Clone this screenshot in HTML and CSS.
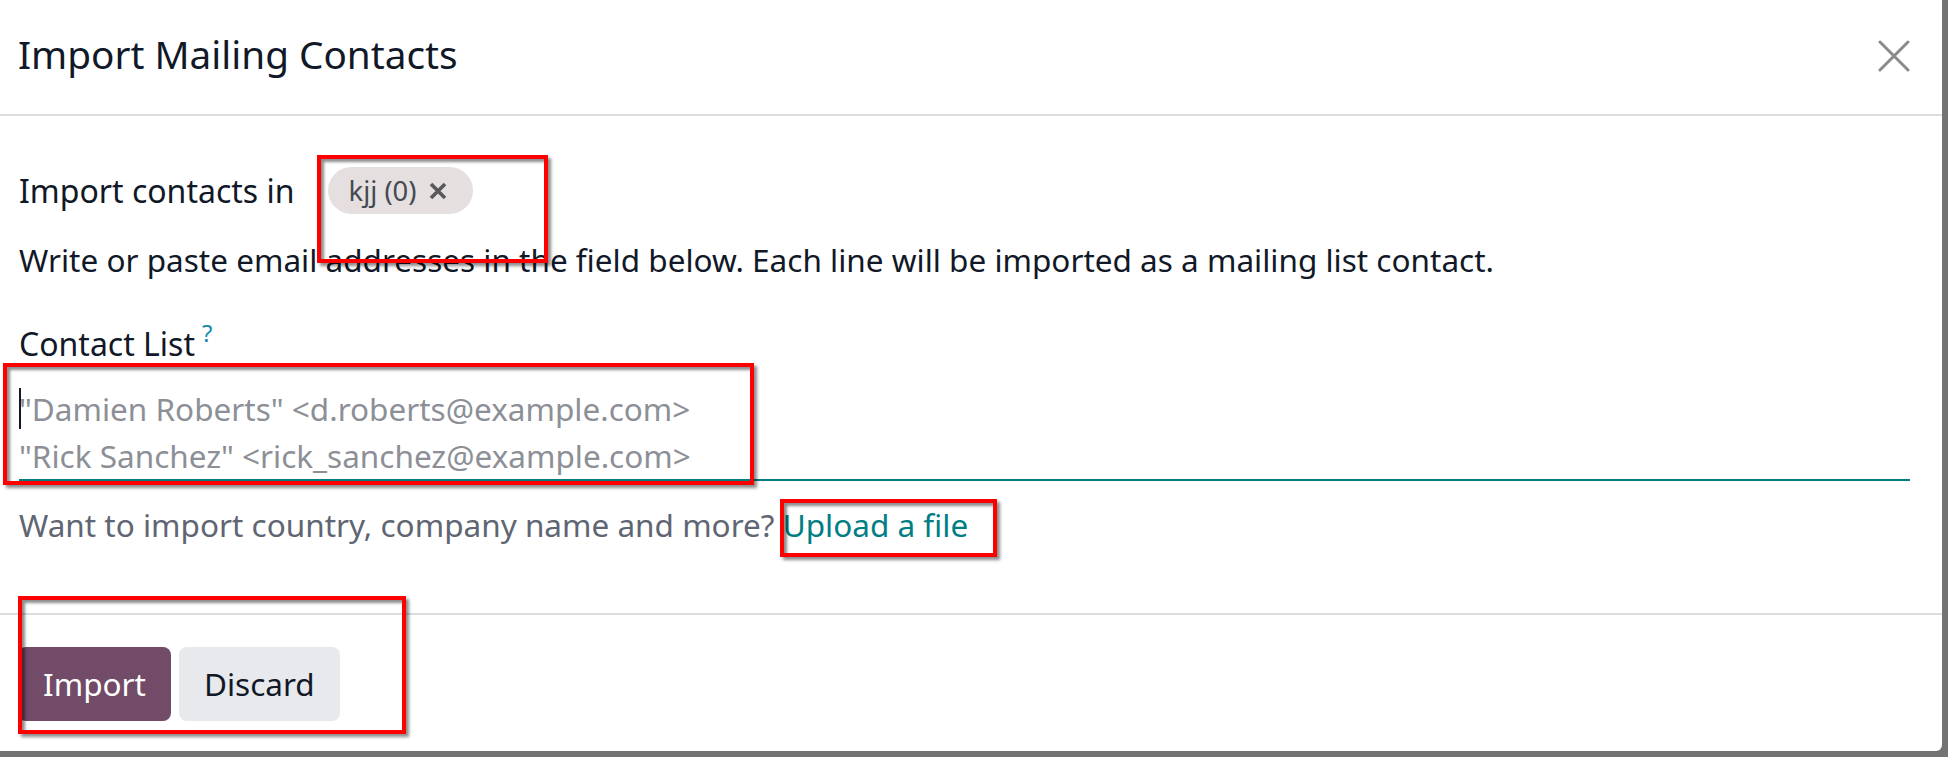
FILE: index.html
```html
<!DOCTYPE html>
<html lang="en">
<head>
<meta charset="utf-8">
<title>Import Mailing Contacts</title>
<link rel="stylesheet" href="styles.css">
</head>
<body>
<div class="modal">
  <header class="modal-header">
    <h4 class="modal-title">Import Mailing Contacts</h4>
    <button class="btn-close" aria-label="Close">
      <svg width="32" height="32" viewBox="0 0 32 32"><path d="M2 2 L30 30 M30 2 L2 30" stroke="#8a8a8a" stroke-width="3" stroke-linecap="round" fill="none"/></svg>
    </button>
  </header>
  <main class="modal-body">
    <div class="field-row">
      <label class="row-label">Import contacts in</label>
      <span class="badge">kjj (0)
        <svg class="badge-x" width="20" height="20" viewBox="0 0 20 20"><path d="M3 3 L17 17 M17 3 L3 17" stroke="#595959" stroke-width="3.6" fill="none"/></svg>
      </span>
    </div>
    <p class="intro">Write or paste email addresses in the field below. Each line will be imported as a mailing list contact.</p>
    <div class="form-label">Contact List<sup class="help">?</sup></div>
    <div class="textarea">
      <span class="caret"></span>
      <div class="ph">"Damien Roberts" &lt;d.roberts@example.com&gt;</div>
      <div class="ph">"Rick Sanchez" &lt;rick_sanchez@example.com&gt;</div>
    </div>
    <p class="muted">Want to import country, company name and more? <a class="link" href="#">Upload a file</a></p>
  </main>
  <footer class="modal-footer">
    <button class="btn btn-primary">Import</button>
    <button class="btn btn-secondary">Discard</button>
  </footer>
  <div class="mark mark-badge"></div>
  <div class="mark mark-area"></div>
  <div class="mark mark-upload"></div>
  <div class="mark mark-buttons"></div>
</div>
</body>
</html>
```
FILE: styles.css
```css
html, body {
  margin: 0;
  padding: 0;
}
body {
  background: #737373;
  width: 1948px;
  height: 757px;
  overflow: hidden;
  font-family: "Noto Sans", "DejaVu Sans", sans-serif;
  color: #111827;
}
.modal {
  position: relative;
  width: 1942px;
  height: 751px;
  background: #ffffff;
  border-bottom-right-radius: 6px;
  display: flex;
  flex-direction: column;
}
.modal-header {
  height: 116px;
  box-sizing: border-box;
  padding: 26px 32px 0 18px;
  border-bottom: 2px solid #dcdde0;
  display: flex;
  justify-content: space-between;
  align-items: flex-start;
  flex: none;
}
.modal-title {
  margin: 0;
  font-size: 38.7px;
  line-height: 57.6px;
  font-weight: 400;
  color: #111827;
}
.btn-close {
  margin-top: 14px;
  padding: 0;
  border: 0;
  background: none;
  width: 32px;
  height: 32px;
  display: block;
}
.modal-body {
  flex: 1;
  padding: 51px 32px 0 19px;
  font-size: 31.5px;
  line-height: 47.25px;
}
.field-row {
  display: flex;
  align-items: center;
  height: 47.25px;
}
.row-label {
  font-size: 32px;
  margin-right: 33px;
}
.badge {
  display: inline-flex;
  align-items: center;
  height: 47px;
  box-sizing: border-box;
  padding: 0 25px 0 21px;
  border-radius: 24px;
  background: #e6dfdf;
  color: #434a54;
  font-size: 27.4px;
  line-height: 47px;
  gap: 12px;
}
.badge-x {
  display: block;
}
.intro {
  margin: 22px 0 0;
}
.form-label {
  margin-top: 36px;
  font-size: 32px;
  color: #111827;
}
.help {
  font-size: 24px;
  color: #1a8bb0;
  margin-left: 7px;
  vertical-align: 14px;
  line-height: 0;
}
.textarea {
  position: relative;
  padding: 18px 0 0 0;
  border-bottom: 2px solid #017e84;
  color: #8c9096;
  font-size: 31.5px;
}
.ph {
  white-space: nowrap;
}
.caret {
  position: absolute;
  left: 0;
  top: 21px;
  width: 2px;
  height: 41px;
  background: #111827;
}
.muted {
  margin: 20px 0 0;
  color: #5f6573;
}
.link {
  color: #017e84;
  text-decoration: none;
}
.modal-footer {
  flex: none;
  border-top: 2px solid #dcdde0;
  padding: 32px 18px 30px;
  display: flex;
  gap: 8px;
}
.btn {
  font-family: "Noto Sans", "DejaVu Sans", sans-serif;
  font-size: 31.5px;
  line-height: 48px;
  height: 74px;
  box-sizing: border-box;
  padding: 13px 25px;
  border: 0;
  border-radius: 8px;
}
.btn-primary {
  background: #714b67;
  color: #ffffff;
}
.btn-secondary {
  background: #e7e9ed;
  color: #111827;
}
.mark {
  position: absolute;
  box-sizing: border-box;
  border: 4px solid #ff0000;
  box-shadow: 3px 3px 3px rgba(0, 0, 0, 0.45), inset 3px 3px 3px rgba(0, 0, 0, 0.45);
  pointer-events: none;
}
.mark-badge {
  left: 317px;
  top: 155px;
  width: 231px;
  height: 108px;
}
.mark-area {
  left: 3px;
  top: 363px;
  width: 751px;
  height: 122px;
}
.mark-upload {
  left: 780px;
  top: 499px;
  width: 217px;
  height: 58px;
}
.mark-buttons {
  left: 18px;
  top: 596px;
  width: 388px;
  height: 138px;
}
```
